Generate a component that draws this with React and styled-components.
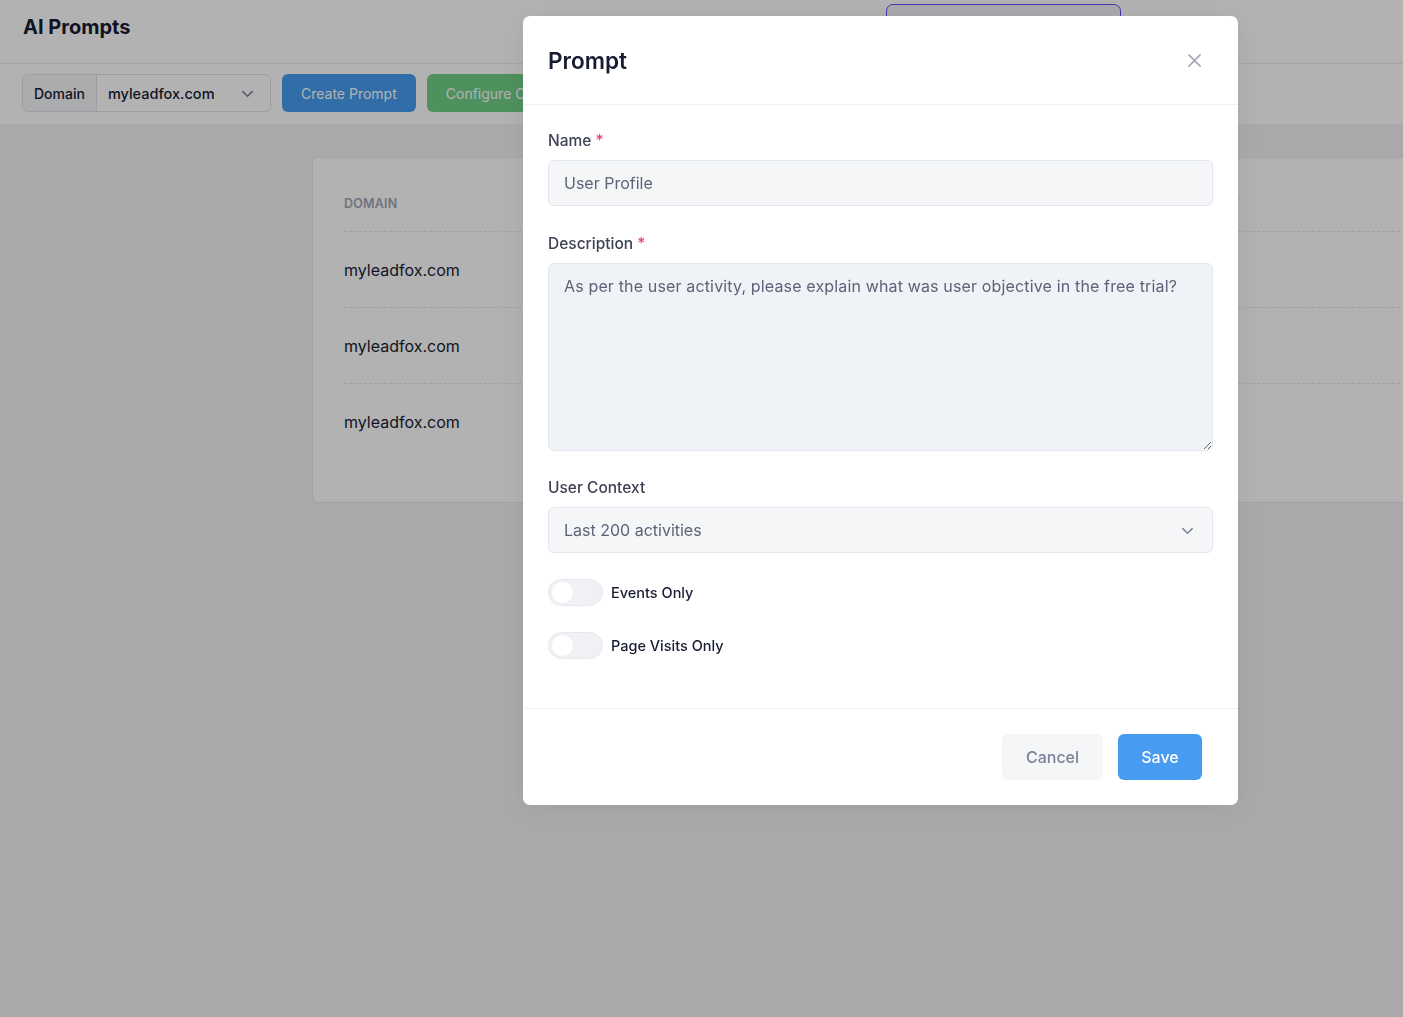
import React from 'react'
import styled, { createGlobalStyle } from 'styled-components'

const GlobalStyle = createGlobalStyle`
    html, body {
        margin: 0;
        padding: 0;
        overflow: hidden;
    }
    body {
        font-family: 'Inter', 'Noto Sans', sans-serif;
        background: #f2f3f6;
        color: #181c32;
    }
    * { box-sizing: border-box; }
`

const Page = styled.div`
    min-height: 100vh;
    width: 1403px;
`

const Header = styled.header`
    height: 64px;
    background: #fff;
    border-bottom: 1px solid #ebedf2;
    display: flex;
    align-items: center;
    padding: 0 23px 10px;
`

const Title = styled.h1`
    margin: 0;
    font-size: 20px;
    font-weight: 700;
    color: #181c32;
`

const OutlineButton = styled.div`
    margin-left: auto;
    margin-right: 259px;
    margin-top: 4px;
    align-self: flex-start;
    width: 235px;
    height: 40px;
    border: 1.5px solid #7446f2;
    border-radius: 7px;
    background: #f4f2fa;
`

const Toolbar = styled.div`
    height: 60px;
    background: #fff;
    display: flex;
    align-items: flex-start;
    gap: 11px;
    padding: 10px 22px 0;
`

const DomainPicker = styled.div`
    display: flex;
    height: 38px;
    width: 249px;
    border: 1px solid #dfe1e6;
    border-radius: 6px;
    overflow: hidden;
    font-weight: 500;
`

const PickerLabel = styled.div`
    display: flex;
    align-items: center;
    padding: 0 11px;
    background: #f5f6f8;
    border-right: 1px solid #dfe1e6;
    color: #181c32;
    font-size: 14px;
`

const PickerValue = styled.div`
    flex: 1;
    display: flex;
    align-items: center;
    justify-content: space-between;
    padding: 0 15px 0 11px;
    color: #181c32;
    font-size: 14.5px;
`

const ToolButton = styled.button`
    height: 38px;
    border: none;
    border-radius: 6px;
    padding: 0 19px;
    font-family: inherit;
    font-size: 14px;
    color: #fff;
    background: ${({ color }) => color};
`

const Content = styled.main`
    padding: 33px 0 0 312px;
`

const Card = styled.section`
    width: 1120px;
    background: #fff;
    border: 1px solid #e7e9ee;
    border-radius: 6px;
    padding: 18px 31px 42px;
`

const Row = styled.div`
    display: grid;
    grid-template-columns: 280px 560px 1fr;
    align-items: center;
    height: ${({ head }) => (head ? '56px' : '76px')};
    border-bottom: ${({ last }) => (last ? 'none' : '1px dashed #e4e6ef')};
`

const HeadCell = styled.div`
    font-size: 12.5px;
    font-weight: 600;
    color: #a1a5b7;
    text-transform: uppercase;
    letter-spacing: 0.2px;
`

const Cell = styled.div`
    font-size: 16px;
    color: #181c32;
`

const Overlay = styled.div`
    position: fixed;
    inset: 0;
    background: rgba(0, 0, 0, 0.3);
    padding: 16px 0 0 523px;
`

const Modal = styled.div`
    width: 715px;
    background: #fff;
    border-radius: 7px;
    box-shadow: 0 4px 30px rgba(0, 0, 0, 0.08);
`

const ModalHeader = styled.div`
    height: 89px;
    display: flex;
    align-items: center;
    justify-content: space-between;
    padding: 0 36px 0 25px;
    border-bottom: 1px solid #eff2f5;
`

const ModalTitle = styled.h2`
    margin: 0;
    font-size: 22.5px;
    font-weight: 600;
    color: #181c32;
`

const CloseButton = styled.button`
    border: none;
    background: none;
    padding: 0;
    display: flex;
    color: #a1a5b7;
`

const ModalBody = styled.div`
    padding: 26px 25px 49px;
`

const Field = styled.div`
    margin-bottom: ${({ gap }) => gap}px;
`

const Label = styled.label`
    display: block;
    font-size: 15.5px;
    font-weight: 500;
    color: #3f4254;
    margin-bottom: 9px;
    line-height: 20px;
`

const Required = styled.span`
    color: #f1416c;
    margin-left: 4px;
`

const Input = styled.div`
    height: 46px;
    display: flex;
    align-items: center;
    justify-content: space-between;
    padding: 0 17px 0 15px;
    background: #f5f6f8;
    border: 1px solid #e4e6ef;
    border-radius: 6px;
    font-size: 16px;
    color: #5e6278;
`

const TextArea = styled.textarea`
    display: block;
    width: 100%;
    height: 188px;
    resize: vertical;
    padding: 11px 15px;
    background: #eff2f6;
    border: 1px solid #e4e6ef;
    border-radius: 6px;
    font-family: inherit;
    font-size: 16px;
    letter-spacing: 0.15px;
    line-height: 22px;
    color: #5e6278;
    outline: none;
`

const ToggleRow = styled.div`
    display: flex;
    align-items: center;
    gap: 8px;
    margin-top: 26px;
`

const Track = styled.span`
    position: relative;
    width: 55px;
    height: 27px;
    border-radius: 14px;
    background: #eff1f5;
    border: 1px solid #e6e8ed;
`

const Knob = styled.span`
    position: absolute;
    left: 3px;
    top: 2px;
    width: 21px;
    height: 21px;
    border-radius: 50%;
    background: #fff;
`

const ToggleLabel = styled.span`
    font-size: 14.5px;
    font-weight: 500;
    color: #181c32;
`

const ModalFooter = styled.div`
    height: 97px;
    display: flex;
    align-items: center;
    justify-content: flex-end;
    gap: 15px;
    padding: 0 36px;
    border-top: 1px solid #eff2f5;
`

const FooterButton = styled.button`
    height: 46px;
    border: none;
    border-radius: 6px;
    font-family: inherit;
    font-size: 16px;
    font-weight: 500;
    width: ${({ primary }) => (primary ? '84px' : '101px')};
    background: ${({ primary }) => (primary ? '#479cf1' : '#f5f6f8')};
    color: ${({ primary }) => (primary ? '#fff' : '#7e8299')};
`

const Chevron = ({ size = 14, color = '#5e6278' }) => (
    <svg width={size} height={size} viewBox="0 0 16 16" fill="none">
        <path d="M3 6l5 5 5-5" stroke={color} strokeWidth="1.6" strokeLinecap="round" strokeLinejoin="round" />
    </svg>
)

const domains = ['myleadfox.com', 'myleadfox.com', 'myleadfox.com']

const App = () => {
    return (
        <Page>
            <GlobalStyle />
            <Header>
                <Title>AI Prompts</Title>
                <OutlineButton />
            </Header>
            <Toolbar>
                <DomainPicker>
                    <PickerLabel>Domain</PickerLabel>
                    <PickerValue>
                        myleadfox.com
                        <Chevron size={15} color="#7e8299" />
                    </PickerValue>
                </DomainPicker>
                <ToolButton color="#469cf2">Create Prompt</ToolButton>
                <ToolButton color="#72cf88">Configure Context</ToolButton>
            </Toolbar>
            <Content>
                <Card>
                    <Row head>
                        <HeadCell>Domain</HeadCell>
                        <HeadCell>Name</HeadCell>
                        <HeadCell>Prompt</HeadCell>
                    </Row>
                    {domains.map((d, i) => (
                        <Row key={i} last={i === domains.length - 1}>
                            <Cell>{d}</Cell>
                            <Cell>User Profile</Cell>
                            <Cell />
                        </Row>
                    ))}
                </Card>
            </Content>

            <Overlay>
                <Modal>
                    <ModalHeader>
                        <ModalTitle>Prompt</ModalTitle>
                        <CloseButton>
                            <svg width="15" height="15" viewBox="0 0 16 16" fill="none">
                                <path d="M2 2l12 12M14 2L2 14" stroke="#a1a5b7" strokeWidth="1.6" strokeLinecap="round" />
                            </svg>
                        </CloseButton>
                    </ModalHeader>
                    <ModalBody>
                        <Field gap={28}>
                            <Label>Name<Required>*</Required></Label>
                            <Input>User Profile</Input>
                        </Field>
                        <Field gap={27}>
                            <Label>Description<Required>*</Required></Label>
                            <TextArea
                                readOnly
                                value="As per the user activity, please explain what was user objective in the free trial?"
                            />
                        </Field>
                        <Field gap={0}>
                            <Label>User Context</Label>
                            <Input>
                                Last 200 activities
                                <Chevron size={15} color="#7e8299" />
                            </Input>
                        </Field>
                        <ToggleRow>
                            <Track><Knob /></Track>
                            <ToggleLabel>Events Only</ToggleLabel>
                        </ToggleRow>
                        <ToggleRow>
                            <Track><Knob /></Track>
                            <ToggleLabel>Page Visits Only</ToggleLabel>
                        </ToggleRow>
                    </ModalBody>
                    <ModalFooter>
                        <FooterButton>Cancel</FooterButton>
                        <FooterButton primary>Save</FooterButton>
                    </ModalFooter>
                </Modal>
            </Overlay>
        </Page>
    )
}

export default App
